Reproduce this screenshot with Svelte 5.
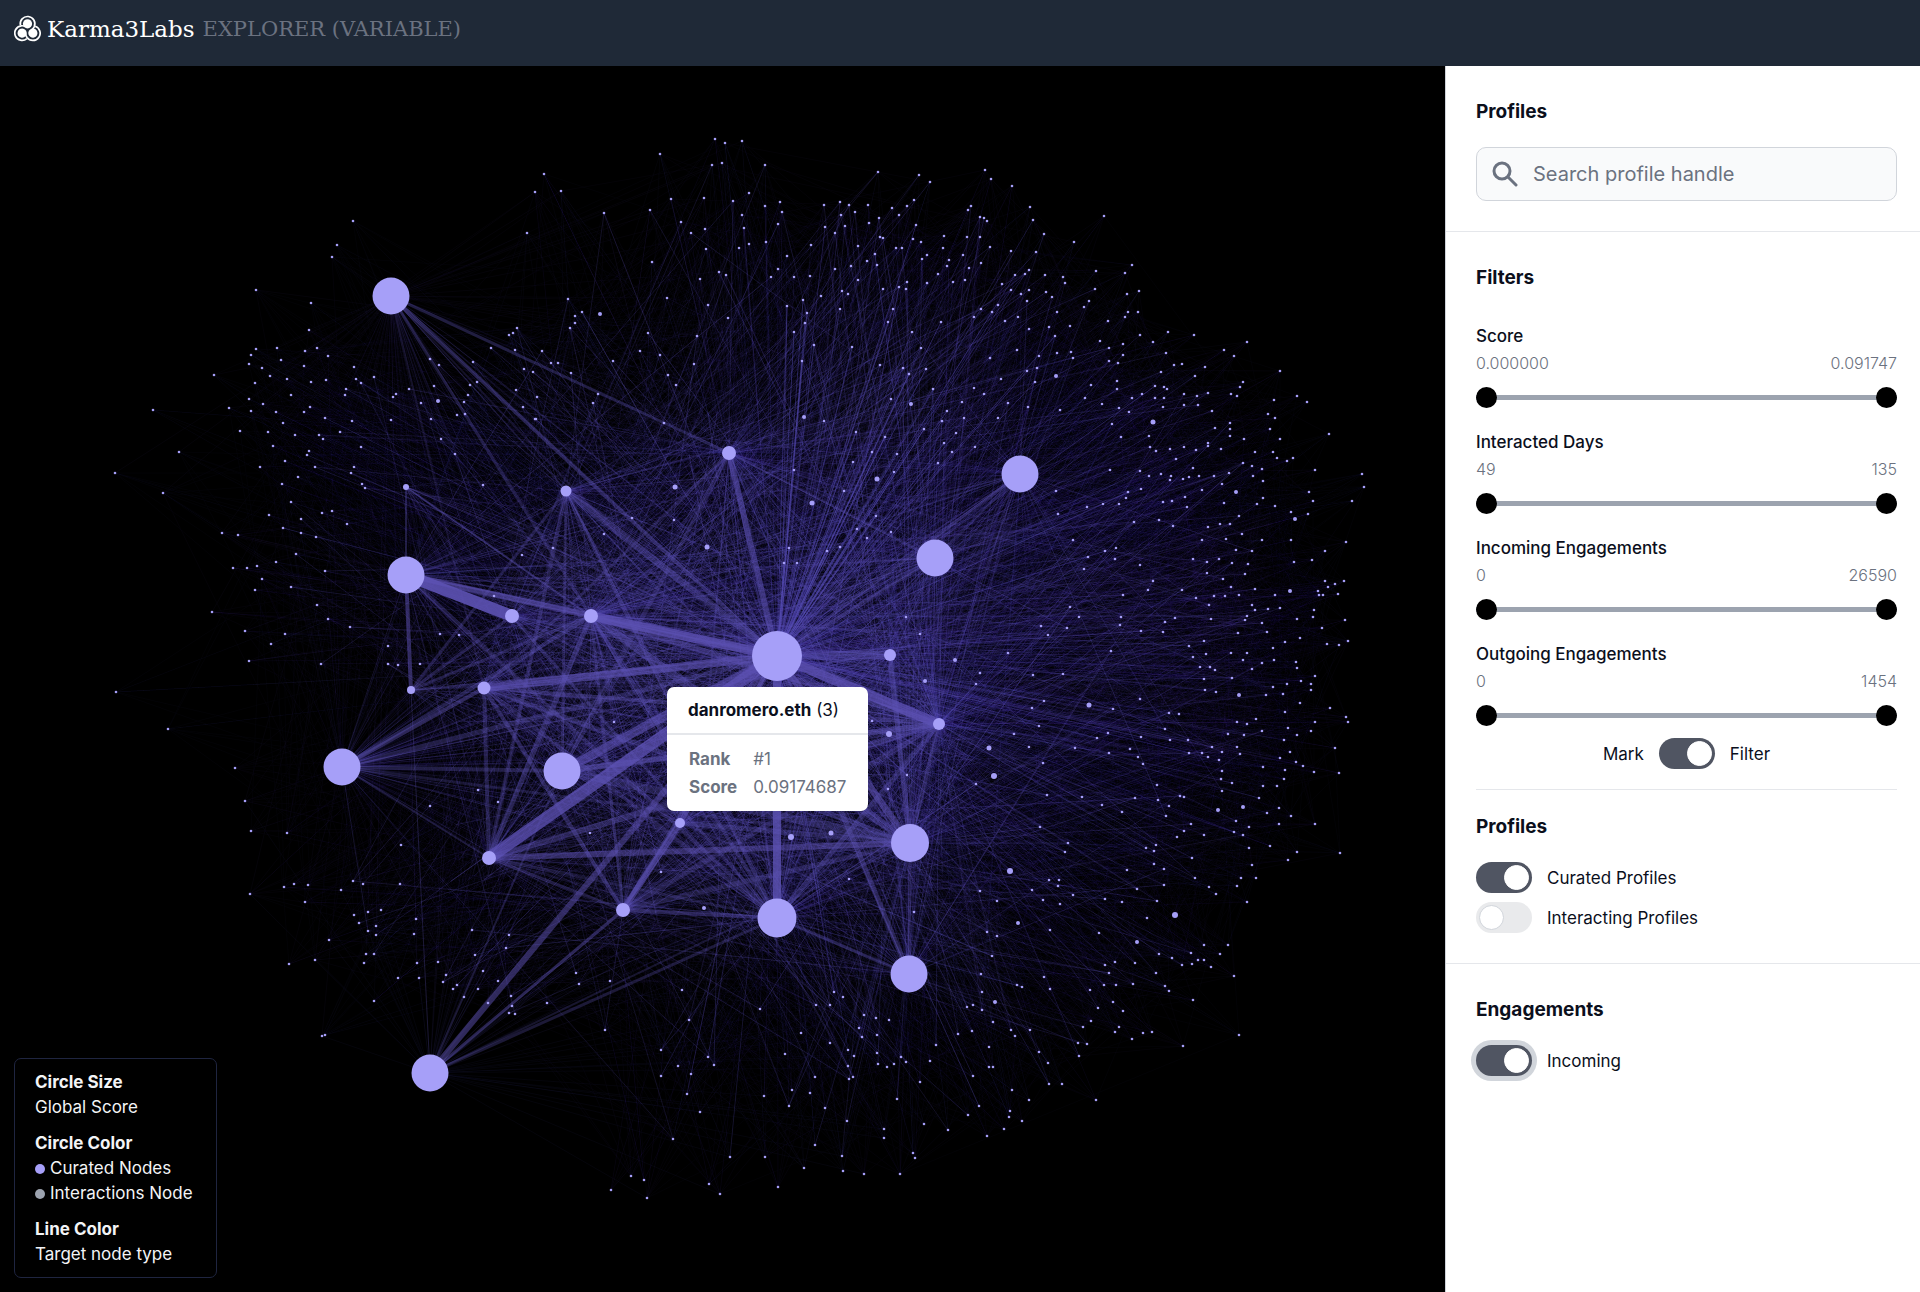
<script>
    let search = $state('')
    let filterMode = $state(true)
    let curated = $state(true)
    let interacting = $state(false)
    let incoming = $state(true)

    let filters = $state([
        { id: 'score', label: 'Score', min: 0, max: 0.091747, low: 0, high: 0.091747, digits: 6 },
        { id: 'days', label: 'Interacted Days', min: 49, max: 135, low: 49, high: 135, digits: 0 },
        { id: 'in', label: 'Incoming Engagements', min: 0, max: 26590, low: 0, high: 26590, digits: 0 },
        { id: 'out', label: 'Outgoing Engagements', min: 0, max: 1454, low: 0, high: 1454, digits: 0 }
    ])

    // x, y, radius
    const hubs = [
        [777, 590, 25], [391, 230, 18.5], [406, 509, 18.5], [342, 701, 18.5], [562, 705, 18.5],
        [777, 852, 19.5], [910, 777, 19], [909, 908, 18.5], [430, 1007, 18.5], [935, 492, 18.5],
        [1020, 408, 18.5], [512, 550, 7], [591, 550, 7], [566, 425, 5.5], [729, 387, 7],
        [406, 421, 3], [411, 624, 4], [484, 622, 6.5], [489, 792, 7], [623, 844, 7],
        [680, 757, 5], [890, 589, 6], [939, 658, 6]
    ]

    // from hub, to hub, width, opacity
    const ties = [
        [2, 11, 12, 0.9], [12, 0, 9, 0.75], [17, 0, 8, 0.6], [18, 0, 12, 0.75], [4, 0, 9, 0.6],
        [0, 22, 10, 0.75], [0, 5, 8, 0.8], [0, 21, 9, 0.4], [14, 0, 6, 0.55], [13, 0, 7, 0.4],
        [2, 12, 6, 0.5], [2, 16, 4, 0.5], [8, 0, 6, 0.5], [19, 20, 6, 0.6], [18, 6, 6, 0.5],
        [6, 0, 7, 0.5], [6, 21, 5, 0.4], [7, 0, 5, 0.4], [3, 17, 4, 0.45], [3, 18, 2, 0.3],
        [3, 4, 4, 0.35], [3, 0, 5, 0.35], [1, 0, 4, 0.4], [1, 14, 3, 0.35], [1, 13, 1, 0.3],
        [19, 5, 4, 0.4], [19, 12, 3, 0.35], [19, 17, 4, 0.4], [19, 6, 5, 0.3], [22, 18, 6, 0.4],
        [22, 4, 6, 0.4], [22, 17, 4, 0.4], [12, 22, 6, 0.45], [12, 6, 8, 0.4], [12, 5, 4, 0.35],
        [12, 18, 5, 0.4], [11, 5, 3, 0.35], [11, 16, 3, 0.3], [13, 18, 4, 0.3], [13, 16, 3, 0.3],
        [13, 5, 4, 0.3], [13, 4, 3, 0.3], [2, 5, 4, 0.3], [2, 0, 5, 0.3], [14, 4, 4, 0.3],
        [14, 17, 3, 0.3], [15, 12, 2, 0.4], [15, 2, 2, 0.35], [17, 18, 4, 0.35], [17, 6, 5, 0.35],
        [17, 5, 4, 0.3], [4, 6, 8, 0.35], [4, 22, 5, 0.3], [20, 6, 5, 0.35], [8, 19, 3, 0.45],
        [8, 5, 3, 0.3], [8, 4, 2, 0.3], [8, 6, 2, 0.25], [7, 5, 3, 0.3], [7, 6, 3, 0.3],
        [9, 0, 4, 0.3], [9, 14, 2, 0.3], [10, 0, 3, 0.3], [10, 9, 3, 0.25], [18, 5, 3, 0.25],
        [18, 19, 3, 0.3], [16, 12, 3, 0.3], [16, 8, 1, 0.3], [16, 0, 2, 0.3], [3, 2, 1, 0.2],
        [1, 17, 2, 0.2], [1, 12, 3, 0.3], [1, 6, 2, 0.2], [19, 0, 4, 0.4], [20, 0, 5, 0.5],
        [22, 6, 4, 0.3], [22, 5, 5, 0.35], [19, 22, 5, 0.3], [3, 6, 3, 0.25], [3, 12, 4, 0.35]
    ]

    // brighter small nodes: x, y, radius
    const minor = [
        [675, 421, 2.5], [707, 481, 2.5], [600, 248, 2], [438, 335, 2], [812, 437, 2.5], [877, 413, 2.5],
        [804, 351, 2], [911, 338, 2], [1056, 310, 2], [1153, 356, 2.5], [1089, 639, 2.5], [994, 710, 3],
        [989, 682, 2.5], [955, 594, 2], [925, 615, 2], [889, 668, 3], [791, 771, 3], [831, 767, 2.5],
        [1010, 805, 3], [1175, 849, 3], [1290, 525, 2], [1239, 629, 2], [1218, 744, 2], [1243, 741, 2],
        [704, 842, 2], [1018, 857, 2], [995, 936, 2], [1137, 876, 2], [1236, 426, 2], [1295, 453, 2]
    ]

    // flat list of x, y pairs
    const specks = [
        715, 73, 725, 77, 742, 75, 660, 88, 712, 99, 722, 97, 765, 99, 544, 108, 535, 126, 561, 125, 878, 106, 919, 109,
        930, 116, 671, 133, 704, 132, 733, 135, 749, 127, 765, 140, 780, 136, 782, 146, 650, 144, 604, 147, 742, 149, 681, 156,
        778, 158, 705, 163, 744, 162, 691, 167, 527, 167, 766, 176, 749, 178, 706, 183, 739, 182, 824, 139, 840, 136, 849, 139,
        855, 146, 868, 139, 841, 149, 825, 161, 845, 160, 835, 167, 869, 157, 879, 152, 892, 142, 899, 149, 907, 140, 914, 134,
        916, 159, 880, 171, 883, 172, 913, 173, 921, 176, 858, 180, 811, 179, 896, 182, 902, 182, 875, 188, 922, 193, 927, 189,
        867, 195, 851, 200, 877, 199, 835, 203, 787, 190, 652, 196, 778, 203, 719, 206, 726, 209, 771, 211, 794, 211, 810, 210,
        700, 213, 858, 214, 907, 216, 927, 217, 899, 221, 906, 223, 883, 223, 842, 225, 848, 228, 821, 230, 568, 233, 667, 232,
        803, 234, 708, 239, 787, 240, 840, 243, 893, 243, 582, 246, 575, 250, 575, 257, 570, 262, 807, 247, 728, 252, 805, 257,
        888, 256, 794, 266, 912, 266, 517, 262, 513, 267, 509, 269, 648, 267, 697, 270, 814, 279, 852, 281, 921, 282, 491, 282,
        515, 284, 542, 285, 640, 285, 660, 289, 551, 297, 558, 297, 613, 295, 524, 303, 533, 306, 571, 307, 694, 298, 668, 309,
        802, 295, 880, 299, 903, 302, 909, 308, 926, 303, 676, 319, 516, 324, 537, 331, 598, 328, 593, 337, 523, 341, 536, 353,
        891, 333, 933, 323, 985, 104, 991, 113, 1012, 120, 971, 140, 968, 144, 980, 151, 984, 152, 987, 155, 1030, 141, 1033, 154,
        1044, 168, 1104, 150, 1074, 176, 944, 170, 967, 171, 980, 171, 943, 182, 990, 181, 1011, 185, 1036, 186, 963, 189, 949, 194,
        947, 200, 969, 202, 981, 197, 938, 208, 953, 216, 965, 214, 1029, 204, 1015, 209, 1025, 208, 1045, 209, 1063, 211, 1065, 217,
        1096, 205, 1132, 199, 1125, 207, 1002, 218, 1011, 224, 1029, 224, 1021, 228, 1046, 226, 1052, 231, 1095, 223, 1139, 225,
        1127, 228, 1027, 235, 998, 239, 981, 243, 992, 246, 974, 251, 1089, 235, 1084, 241, 1057, 246, 1128, 246, 1138, 246,
        1125, 251, 1108, 255, 1018, 251, 1005, 255, 941, 256, 1029, 263, 1049, 261, 1070, 260, 1055, 270, 1140, 269, 1168, 266,
        1194, 269, 1100, 275, 1123, 278, 1153, 276, 1109, 282, 1017, 284, 1057, 287, 1071, 286, 1039, 290, 990, 292, 1073, 292,
        1109, 295, 1118, 297, 1123, 289, 1166, 287, 1224, 284, 1247, 276, 1234, 290, 1174, 299, 1182, 298, 1161, 306, 1205, 301,
        1195, 310, 1280, 305, 1243, 316, 1240, 321, 1117, 315, 1117, 323, 1027, 305, 1037, 302, 1001, 313, 1035, 316, 1091, 319,
        974, 322, 984, 328, 1085, 332, 1155, 320, 1164, 321, 1167, 323, 1142, 328, 1132, 332, 1155, 332, 1164, 332, 1163, 341,
        1184, 328, 1197, 330, 1208, 327, 1231, 328, 1237, 330, 1184, 339, 1198, 339, 1212, 345, 1274, 334, 1297, 330, 1307, 336,
        1268, 348, 1275, 352, 1102, 338, 1119, 342, 1129, 346, 1112, 358, 1060, 344, 1028, 341, 1008, 337, 998, 352, 962, 336,
        947, 345, 964, 352, 942, 355, 956, 367, 944, 377, 952, 386, 975, 381, 938, 397, 1121, 371, 1149, 370, 1150, 381, 1156, 385,
        1170, 383, 1184, 381, 1196, 384, 1208, 377, 1208, 380, 1221, 383, 1215, 362, 1230, 357, 1230, 363, 1230, 370, 1244, 373,
        1270, 363, 1280, 373, 1329, 368, 1176, 393, 1255, 386, 1273, 386, 1277, 392, 1287, 395, 1293, 392, 1243, 397, 1252, 400,
        1262, 403, 1193, 402, 1110, 404, 1140, 405, 1149, 410, 1161, 408, 1171, 410, 1170, 414, 1183, 413, 1189, 411, 1199, 410,
        1214, 410, 1229, 407, 1253, 410, 1263, 415, 1315, 404, 1362, 408, 1364, 421, 1222, 418, 1202, 424, 1309, 426, 1263, 432,
        1313, 435, 1352, 435, 1141, 423, 1128, 426, 1126, 432, 1119, 438, 1103, 438, 1087, 441, 1058, 448, 1056, 425, 1163, 436,
        1172, 435, 1185, 431, 1187, 441, 1224, 437, 1257, 438, 1275, 440, 1291, 446, 1308, 448, 1239, 450, 1134, 456, 1159, 454,
        1173, 460, 1208, 461, 1220, 458, 1230, 458, 1346, 476, 1291, 474, 1262, 474, 1242, 468, 1202, 474, 1226, 473, 1073, 474,
        1325, 485, 1236, 484, 1252, 485, 1116, 482, 1105, 485, 1088, 491, 1115, 493, 1193, 493, 1207, 496, 1219, 493, 1232, 497,
        1248, 498, 1294, 496, 1312, 494, 1140, 499, 1084, 503, 1207, 507, 1245, 508, 1223, 513, 1153, 515, 1325, 515, 1335, 518,
        1344, 515, 1328, 521, 1318, 525, 1319, 529, 1323, 529, 1338, 528, 1275, 529, 1231, 521, 1255, 523, 1148, 524, 1182, 524,
        1123, 529, 1196, 532, 1214, 530, 1225, 530, 1239, 529, 1209, 539, 1252, 539, 1255, 544, 1268, 543, 1280, 542, 1314, 544,
        1313, 551, 1345, 554, 1297, 553, 1247, 550, 1245, 554, 1262, 557, 1070, 541, 1079, 551, 1121, 551, 1120, 559, 1165, 556,
        1175, 552, 1211, 553, 1041, 560, 1067, 562, 1048, 569, 1141, 565, 1163, 566, 1238, 567, 1267, 566, 1322, 562, 1300, 572,
        1285, 576, 1204, 575, 1189, 580, 1348, 575, 1327, 578, 1339, 579, 1273, 582, 1111, 585, 1008, 587, 1206, 588, 1231, 587,
        1247, 587, 1193, 591, 1243, 594, 1274, 594, 1262, 597, 1296, 596, 1297, 602, 980, 607, 976, 618, 1033, 609, 1063, 608,
        1200, 601, 1210, 601, 1215, 604, 1252, 603, 1204, 613, 1232, 612, 1301, 615, 1315, 610, 1287, 618, 1273, 621, 1311, 618,
        1311, 624, 1205, 624, 1216, 626, 1266, 629, 1283, 628, 1300, 637, 1044, 635, 1032, 642, 1113, 643, 1140, 633, 1169, 647,
        1179, 648, 1285, 646, 1330, 642, 1346, 651, 1348, 656, 1315, 656, 1256, 653, 1237, 656, 1247, 658, 1039, 660, 1014, 668,
        1075, 682, 1029, 681, 1043, 697, 976, 718, 1097, 672, 1108, 667, 1109, 687, 1141, 671, 1130, 683, 1138, 691, 1143, 698,
        1165, 663, 1170, 674, 1188, 674, 1189, 687, 1202, 687, 1212, 681, 1208, 691, 1219, 694, 1222, 686, 1228, 668, 1244, 669,
        1237, 681, 1240, 688, 1262, 665, 1288, 662, 1311, 665, 1297, 669, 1284, 674, 1335, 682, 1290, 686, 1280, 692, 1296, 696,
        1303, 700, 1314, 706, 1285, 704, 1263, 701, 1339, 707, 1222, 705, 1221, 713, 1284, 713, 1232, 717, 1263, 720, 1277, 720,
        1157, 719, 1222, 725, 1047, 729, 1082, 731, 1135, 732, 1158, 734, 1180, 730, 1184, 731, 1259, 732, 1102, 739, 1122, 746,
        1169, 740, 1166, 750, 1279, 742, 1267, 747, 1291, 750, 1236, 755, 1279, 758, 1315, 758, 1040, 761, 1191, 758, 1249, 761,
        1234, 766, 1243, 769, 1184, 765, 1204, 769, 1177, 771, 1068, 777, 1065, 786, 1146, 782, 1156, 779, 1154, 785, 1154, 798,
        1192, 792, 1249, 782, 1270, 780, 1297, 786, 1340, 787, 1288, 794, 1252, 799, 1127, 804, 1164, 803, 1195, 812, 1241, 812,
        1256, 812, 1049, 814, 1059, 814, 1032, 824, 824, 355, 853, 396, 844, 425, 856, 366, 872, 386, 885, 371, 897, 388, 894, 406,
        876, 450, 857, 463, 867, 472, 891, 466, 840, 481, 827, 485, 789, 482, 797, 497, 784, 497, 794, 404, 924, 363, 906, 551,
        920, 568, 872, 655, 888, 723, 907, 709, 980, 825, 849, 813, 997, 835, 1058, 820, 1043, 834, 1060, 838, 1073, 829, 1105, 833,
        1122, 836, 1137, 823, 1157, 835, 1164, 819, 1209, 821, 1216, 828, 1237, 820, 1247, 836, 1147, 852, 1050, 864, 1099, 867,
        987, 866, 997, 870, 914, 846, 992, 890, 1159, 888, 1172, 892, 1191, 887, 1204, 879, 1228, 879, 1220, 888, 1204, 894,
        1198, 894, 1192, 898, 1182, 899, 1211, 901, 1234, 910, 1135, 897, 1115, 896, 1105, 899, 1109, 907, 1156, 907, 981, 908,
        1017, 919, 1022, 921, 1044, 911, 1050, 923, 1090, 924, 1104, 919, 1116, 919, 1133, 918, 1165, 920, 1169, 925, 1193, 934,
        982, 926, 982, 944, 973, 939, 967, 941, 1113, 936, 1098, 942, 1123, 945, 1091, 955, 1083, 961, 1119, 961, 1115, 966,
        1143, 967, 1152, 966, 1132, 973, 1239, 969, 1183, 980, 993, 956, 972, 965, 958, 968, 1011, 964, 1015, 970, 1030, 964,
        1078, 977, 1087, 978, 1079, 990, 1039, 986, 1048, 997, 1049, 1018, 1062, 1018, 989, 981, 989, 1001, 993, 1001, 973, 1010,
        1012, 1024, 1029, 1034, 1096, 1034, 979, 1040, 968, 1049, 1010, 1045, 1009, 1051, 1022, 1055, 1004, 1063, 987, 1070,
        948, 1064, 924, 1058, 897, 1033, 920, 1016, 930, 995, 936, 979, 834, 926, 843, 931, 816, 939, 830, 939, 864, 949, 876, 952,
        889, 954, 859, 962, 862, 971, 877, 969, 801, 967, 830, 977, 848, 984, 854, 990, 877, 987, 901, 991, 906, 996, 894, 998,
        887, 1001, 878, 998, 848, 1000, 785, 988, 815, 1011, 853, 1011, 849, 1013, 792, 1024, 810, 1027, 789, 1040, 825, 1042,
        847, 1055, 884, 1063, 884, 1072, 913, 1087, 915, 1092, 815, 1079, 842, 1090, 804, 1102, 843, 1105, 864, 1108, 900, 1108,
        321, 598, 388, 598, 398, 599, 420, 598, 614, 656, 478, 724, 498, 736, 430, 740, 590, 767, 661, 806, 401, 779, 353, 815,
        363, 818, 400, 818, 308, 819, 341, 824, 381, 844, 368, 846, 354, 849, 359, 857, 376, 860, 368, 865, 376, 869, 416, 853,
        414, 868, 472, 864, 509, 869, 506, 882, 475, 889, 366, 888, 374, 888, 364, 897, 315, 894, 417, 897, 438, 896, 483, 905,
        446, 909, 443, 916, 419, 912, 398, 912, 498, 915, 457, 919, 453, 923, 478, 923, 464, 931, 488, 937, 511, 930, 512, 940,
        509, 947, 515, 948, 547, 937, 576, 907, 579, 918, 610, 915, 374, 935, 322, 970, 325, 969, 605, 964, 682, 924, 760, 943,
        689, 954, 661, 984, 678, 1000, 708, 991, 714, 999, 691, 1008, 661, 1010, 687, 1028, 764, 1030, 631, 1110, 644, 1114,
        611, 1124, 647, 1132, 673, 1073, 700, 1046, 709, 1118, 720, 1128, 778, 1121, 730, 1091, 765, 1091, 337, 179, 332, 191,
        311, 237, 309, 264, 317, 282, 305, 285, 328, 290, 304, 300, 326, 314, 311, 316, 354, 301, 356, 313, 361, 317, 374, 311,
        346, 323, 345, 329, 396, 328, 393, 331, 409, 323, 430, 293, 439, 299, 434, 320, 421, 337, 473, 296, 477, 316, 470, 319,
        468, 329, 464, 336, 457, 349, 465, 348, 431, 353, 391, 354, 310, 341, 304, 346, 325, 352, 352, 355, 340, 366, 319, 369,
        323, 373, 309, 385, 307, 389, 361, 381, 441, 373, 455, 388, 315, 401, 354, 401, 351, 407, 362, 418, 365, 422, 332, 445,
        322, 447, 347, 458, 316, 471, 301, 453, 301, 467, 325, 505, 317, 539, 328, 553, 350, 561, 388, 580, 440, 568, 459, 569,
        483, 419, 535, 353, 664, 357, 632, 452, 604, 468, 674, 454, 553, 482, 522, 489, 494, 530, 256, 224, 353, 155, 115, 407,
        153, 344, 179, 386, 163, 427, 116, 626, 168, 663, 214, 309, 256, 283, 251, 289, 249, 298, 255, 317, 249, 333, 229, 342,
        251, 345, 222, 467, 238, 469, 240, 365, 233, 502, 247, 502, 257, 500, 255, 524, 212, 546, 245, 565, 271, 578, 249, 595,
        285, 568, 245, 735, 251, 765, 287, 767, 235, 702, 294, 818, 284, 821, 250, 828, 305, 836, 289, 898, 329, 874, 262, 302,
        277, 282, 281, 294, 270, 310, 287, 313, 291, 329, 263, 338, 276, 346, 283, 357, 268, 366, 295, 369, 273, 380, 285, 395,
        260, 401, 298, 411, 282, 418, 291, 436, 269, 449, 283, 462, 296, 488, 276, 496, 262, 513, 291, 521
    ]

    const dots = []
    for (let i = 0; i < specks.length; i += 2) dots.push([specks[i], specks[i + 1]])

    let seed = 41
    function rand() {
        seed = (seed * 16807) % 2147483647
        return seed / 2147483647
    }

    // 1 in the middle of the graph, 0 at its rim
    function nearness(x, y) {
        return Math.max(0, 1 - Math.hypot(x - 777, y - 590) / 640)
    }

    // each speck gets a handful of weak links, mostly towards the middle
    const pull = [0, 0, 0, 0, 0, 0, 9, 12, 12, 14, 14, 17, 18, 19, 6, 6, 5, 5, 4, 20, 21, 22, 22, 22, 13, 11, 10, 7, 3, 2]
    const links = []
    for (const [x, y] of dots) {
        const near = nearness(x, y)
        for (let n = 0; n < 8; n++) {
            const hub = hubs[pull[Math.floor(rand() * pull.length)]]
            const strong = rand() < 0.08 && near > 0.2
            links.push([x, y, hub[0], hub[1], strong ? 0.12 + near * 0.3 : 0.03 + near * 0.08])
        }
        for (let n = 0; n < 3; n++) {
            const other = dots[Math.floor(rand() * dots.length)]
            if (Math.hypot(other[0] - x, other[1] - y) < 600) links.push([x, y, other[0], other[1], 0.03 + near * 0.04])
        }
        // the two outer hubs on the left fan out over their own side
        if (x < 760 && rand() < 0.4) links.push([x, y, hubs[1][0], hubs[1][1], 0.05])
        if (y > 700 && x < 900 && rand() < 0.4) links.push([x, y, hubs[8][0], hubs[8][1], 0.06])
        // bright streaks up and right of the centre
        if (x > 780 && x < 960 && y > 230 && y < 500) links.push([x, y, hubs[0][0], hubs[0][1], 0.35])
    }

    // fans from every hub to the inner ones
    const inner = [0, 4, 5, 6, 11, 12, 14, 17, 18, 19, 20, 21, 22]
    for (const hub of hubs) {
        for (const i of inner) {
            if (hubs[i] == hub) continue
            const near = nearness((hub[0] + hubs[i][0]) / 2, (hub[1] + hubs[i][1]) / 2)
            for (let n = 0; n < 2; n++) {
                const x2 = hubs[i][0] + (rand() - 0.5) * 90
                const y2 = hubs[i][1] + (rand() - 0.5) * 90
                links.push([hub[0], hub[1], x2, y2, 0.04 + near * near * 0.3])
            }
        }
    }
</script>

{#snippet toggle(id, label, checked, change)}
    <input class="switch" type="checkbox" role="switch" {id} aria-label={label} {checked} onchange={change} />
{/snippet}

<div class="page">
    <header>
        <svg class="mark" viewBox="0 0 27 27" aria-hidden="true">
            {#each [0, 120, 240] as turn}
                <g transform="rotate({turn} 13.5 15)">
                    <circle cx="13.5" cy="8.8" r="4.6" fill="#fff" />
                    <path d="M6.400 10.200A7.300 7.300 0 1 1 20.300 11.600Q19.300 13.800 17.400 15" fill="none" stroke="#fff" stroke-width="1.700" />
                </g>
            {/each}
        </svg>
        <span class="brand">Karma3Labs</span>
        <span class="sub">EXPLORER (VARIABLE)</span>
    </header>

    <main>
        <section class="graph" aria-label="Profile graph">
            <svg class="web">
                <g stroke="#5a50b4" stroke-width="1">
                    {#each links as [x1, y1, x2, y2, o]}
                        <line {x1} {y1} {x2} {y2} stroke-opacity={o} />
                    {/each}
                </g>
                <g stroke="#5d52b4">
                    {#each ties as [a, b, w, o]}
                        <line x1={hubs[a][0]} y1={hubs[a][1]} x2={hubs[b][0]} y2={hubs[b][1]} stroke-width={w} stroke-opacity={o} />
                    {/each}
                </g>
                <g fill="#a69ff8">
                    {#each dots as [cx, cy]}
                        <circle {cx} {cy} r="1.3" />
                    {/each}
                    {#each minor as [cx, cy, r]}
                        <circle {cx} {cy} {r} />
                    {/each}
                    {#each hubs as [cx, cy, r]}
                        <circle {cx} {cy} {r} />
                    {/each}
                </g>
            </svg>

            <div class="tooltip" style="left: {hubs[0][0] - 110}px; top: {hubs[0][1] + 31}px">
                <div class="name"><b>danromero.eth</b> (3)</div>
                <table>
                    <tbody>
                        <tr><th scope="row">Rank</th><td>#1</td></tr>
                        <tr><th scope="row">Score</th><td>0.09174687</td></tr>
                    </tbody>
                </table>
            </div>

            <div class="legend">
                <div>
                    <b>Circle Size</b>
                    <span>Global Score</span>
                </div>
                <div>
                    <b>Circle Color</b>
                    <span><i class="curated"></i>Curated Nodes</span>
                    <span><i></i>Interactions Node</span>
                </div>
                <div>
                    <b>Line Color</b>
                    <span>Target node type</span>
                </div>
            </div>
        </section>

        <aside>
            <section>
                <h2><label for="search">Profiles</label></h2>
                <div class="search">
                    <svg viewBox="0 0 26 26" fill="none" stroke="#6b7280" aria-hidden="true">
                        <circle cx="10" cy="10" r="8" stroke-width="3" />
                        <path d="M16 16L24 24" stroke-width="3" stroke-linecap="round" />
                    </svg>
                    <input id="search" type="text" placeholder="Search profile handle" bind:value={search} />
                </div>
            </section>

            <section>
                <h2>Filters</h2>
                <div class="filters">
                    {#each filters as f}
                        <div class="filter">
                            <label for="{f.id}-low">{f.label}</label>
                            <div class="values">
                                <span>{f.low.toFixed(f.digits)}</span>
                                <span>{f.high.toFixed(f.digits)}</span>
                            </div>
                            <div class="range">
                                <input id="{f.id}-low" type="range" min={f.min} max={f.max} step="any" bind:value={f.low} />
                                <input type="range" aria-label="{f.label} maximum" min={f.min} max={f.max} step="any" bind:value={f.high} />
                            </div>
                        </div>
                    {/each}
                </div>
                <div class="mode">
                    <span>Mark</span>
                    {@render toggle('mode', 'Mark or filter', filterMode, () => (filterMode = !filterMode))}
                    <label for="mode">Filter</label>
                </div>
                <div class="group">
                    <h2>Profiles</h2>
                    <div class="row">
                        {@render toggle('curated', 'Curated Profiles', curated, () => (curated = !curated))}
                        <label for="curated">Curated Profiles</label>
                    </div>
                    <div class="row">
                        {@render toggle('interacting', 'Interacting Profiles', interacting, () => (interacting = !interacting))}
                        <label for="interacting">Interacting Profiles</label>
                    </div>
                </div>
            </section>

            <section>
                <h2>Engagements</h2>
                <div class="row active">
                    {@render toggle('incoming', 'Incoming', incoming, () => (incoming = !incoming))}
                    <label for="incoming">Incoming</label>
                </div>
            </section>
        </aside>
    </main>
</div>

<style>
    :global(body) {
        margin: 0;
    }

    .page {
        display: flex;
        flex-direction: column;
        min-height: 100vh;
        font-family: Inter, "Liberation Sans", sans-serif;
        font-size: 17px;
        line-height: 26px;
        color: #0b0f1c;
    }

    header {
        display: flex;
        align-items: center;
        gap: 6px;
        box-sizing: border-box;
        height: 66px;
        padding: 0 14px 9px;
        background: #1f2937;
        font-family: "DejaVu Serif", serif;
        color: #fff;
    }

    .mark {
        width: 27px;
        height: 27px;
    }

    .brand {
        font-size: 23px;
    }

    .sub {
        padding-left: 2px;
        font-size: 21px;
        font-weight: 300;
        color: #6b7280;
    }

    main {
        display: flex;
        flex: 1;
    }

    .graph {
        position: relative;
        flex: 1;
        overflow: hidden;
        background: #000;
    }

    .web {
        position: absolute;
        width: 100%;
        height: 100%;
    }

    .tooltip {
        position: absolute;
        border-radius: 7px;
        background: #fff;
    }

    .name {
        padding: 10px 21px;
        border-bottom: 2px solid #e5e7eb;
    }

    table {
        margin: 10px 20px;
        border-collapse: collapse;
        color: #6b7280;
    }

    th, td {
        padding: 1px 2px;
        text-align: left;
    }

    th {
        padding-right: 14px;
    }

    .legend {
        position: absolute;
        left: 14px;
        bottom: 14px;
        display: flex;
        flex-direction: column;
        gap: 11px;
        padding: 11px 23px 10px 20px;
        border: 1px solid #1f2540;
        border-radius: 7px;
        line-height: 25px;
        color: #f3f4f6;
    }

    .legend b, .legend span {
        display: flex;
        align-items: center;
        gap: 5px;
    }

    .legend i {
        width: 10px;
        height: 10px;
        border-radius: 50%;
        background: #9ca3af;
    }

    .legend .curated {
        background: #a69ff8;
    }

    aside {
        flex: 0 0 474px;
        border-left: 1px solid #cfd3da;
        background: #fff;
    }

    aside section {
        padding: 31px 23px 30px 30px;
        border-bottom: 1px solid #e5e7eb;
    }

    aside section:last-child {
        border-bottom: 0;
    }

    h2 {
        margin: 0 0 20px;
        font-size: 19px;
        font-weight: 700;
        line-height: 30px;
    }

    .search {
        display: flex;
        align-items: center;
        gap: 15px;
        padding: 0 15px;
        border: 1px solid #d1d5db;
        border-radius: 10px;
        background: #f9fafb;
    }

    .search svg {
        width: 26px;
        height: 26px;
    }

    .search input {
        flex: 1;
        height: 52px;
        padding: 0;
        border: 0;
        outline: 0;
        background: none;
        font: inherit;
        font-size: 20px;
    }

    .search input::placeholder {
        color: #6b7280;
        opacity: 1;
    }

    .filters {
        display: flex;
        flex-direction: column;
        gap: 21px;
        padding-top: 10px;
    }

    .filter > label {
        display: block;
        font-weight: 500;
    }

    .values {
        display: flex;
        justify-content: space-between;
        margin-top: 1px;
        font-size: 16px;
        font-weight: 300;
        color: #6b7280;
    }

    .range {
        display: grid;
        align-items: center;
        margin-top: 10px;
        background: linear-gradient(#9ca3af, #9ca3af) center / 100% 5px no-repeat;
    }

    .range input {
        grid-area: 1 / 1;
        width: 100%;
        height: 22px;
        margin: 0;
        appearance: none;
        background: none;
        pointer-events: none;
    }

    .range input::-webkit-slider-thumb {
        width: 21px;
        height: 21px;
        border-radius: 50%;
        appearance: none;
        background: #000;
        pointer-events: auto;
    }

    .switch {
        box-sizing: border-box;
        width: 56px;
        height: 31px;
        margin: 0;
        padding: 3px;
        border-radius: 16px;
        appearance: none;
        background: #e9eaec;
    }

    .switch::before {
        content: "";
        display: block;
        box-sizing: border-box;
        width: 25px;
        height: 25px;
        border: 1px solid #d1d5db;
        border-radius: 50%;
        background: #fff;
    }

    .switch:checked {
        background: #505562;
    }

    .switch:checked::before {
        margin-left: auto;
        border-color: #fff;
    }

    .mode, .row {
        display: flex;
        align-items: center;
        gap: 15px;
    }

    .mode {
        justify-content: center;
        margin-top: 12px;
    }

    .group {
        margin-top: 20px;
        padding-top: 22px;
        border-top: 1px solid #e5e7eb;
    }

    .row + .row {
        margin-top: 9px;
    }

    .active .switch {
        box-shadow: 0 0 0 5px #d1d5db;
    }
</style>
